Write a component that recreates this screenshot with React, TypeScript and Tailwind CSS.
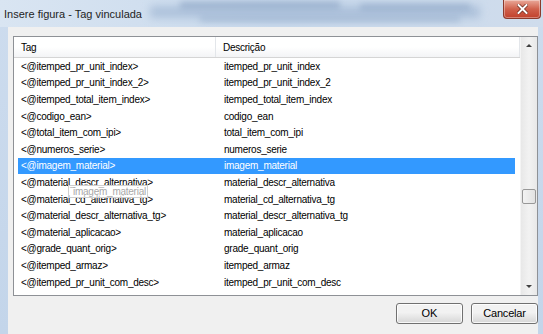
import React from "react";

const rows: [string, string][] = [
  ["<@itemped_pr_unit_index>", "itemped_pr_unit_index"],
  ["<@itemped_pr_unit_index_2>", "itemped_pr_unit_index_2"],
  ["<@itemped_total_item_index>", "itemped_total_item_index"],
  ["<@codigo_ean>", "codigo_ean"],
  ["<@total_item_com_ipi>", "total_item_com_ipi"],
  ["<@numeros_serie>", "numeros_serie"],
  ["<@imagem_material>", "imagem_material"],
  ["<@material_descr_alternativa>", "material_descr_alternativa"],
  ["<@material_cd_alternativa_tg>", "material_cd_alternativa_tg"],
  ["<@material_descr_alternativa_tg>", "material_descr_alternativa_tg"],
  ["<@material_aplicacao>", "material_aplicacao"],
  ["<@grade_quant_orig>", "grade_quant_orig"],
  ["<@itemped_armaz>", "itemped_armaz"],
  ["<@itemped_pr_unit_com_desc>", "itemped_pr_unit_com_desc"],
];

const SELECTED = 6;

export default function App() {
  return (
    <div className="relative w-[543px] h-[334px] overflow-hidden flex flex-col bg-gradient-to-b from-[#cddcee] to-[#c3d5ea] font-['Liberation_Sans',Arial,sans-serif]">
      {/* Title bar (aero glass) */}
      <div className="relative h-[27px] shrink-0 overflow-hidden bg-gradient-to-r from-[#d9e5f2] via-[#c9d9ec] to-[#cfdcec]">
        {/* blurred stuff behind the glass */}
        <div className="absolute left-[150px] top-[6px] w-[330px] h-[12px] bg-[#9fb6d3] blur-[4px] opacity-70" />
        <div className="absolute left-[180px] top-[2px] w-[160px] h-[6px] bg-[#7f99bd] blur-[3px] opacity-60" />
        <div className="absolute left-[360px] top-[4px] w-[110px] h-[6px] bg-[#8aa3c4] blur-[3px] opacity-60" />
        <div className="absolute left-[200px] top-[16px] w-[260px] h-[6px] bg-[#8ea7c7] blur-[3px] opacity-50" />
        <div className="relative pl-[4px] pt-[6px] text-[11px] text-[#1e1e1e]">
          Insere figura - Tag vinculada
        </div>
        {/* close button */}
        <div className="absolute left-[503px] top-0 w-[38px] h-[19px] rounded-b-[4px] border border-t-0 border-[#8b3a2c] bg-gradient-to-b from-[#e9a99a] via-[#d0614c] to-[#c1402b] flex items-center justify-center shadow-[inset_0_0_0_1px_rgba(255,255,255,0.35)]">
          <svg width="11" height="10" viewBox="0 0 11 10">
            <path d="M1.5 1 L9.5 9 M9.5 1 L1.5 9" stroke="#6a2518" strokeWidth="3.4" strokeLinecap="square" />
            <path d="M1.5 1 L9.5 9 M9.5 1 L1.5 9" stroke="#ffffff" strokeWidth="2" strokeLinecap="square" />
          </svg>
        </div>
      </div>

      {/* Client area */}
      <div className="flex-1 ml-[8px] mr-[5px] bg-[#f0f0f0] flex flex-col pt-[9px] pl-[5px]">
        {/* List view */}
        <div className="relative h-[260px] border border-[#8e9196] bg-white flex text-[10px] tracking-[-0.25px] text-black">
          <div className="flex-1 flex flex-col">
            {/* header */}
            <div className="h-[21px] flex border-b border-[#d5d5d5] bg-gradient-to-b from-white from-50% to-[#f3f4f6]">
              <div className="w-[202px] pl-[7px] flex items-center border-r border-[#e3e6ea]">Tag</div>
              <div className="flex-1 pl-[7px] flex items-center border-r border-[#e3e6ea]">Descrição</div>
            </div>
            {/* rows */}
            <div className="flex flex-col">
              {rows.map(([tag, desc], i) => (
                <div
                  key={i}
                  className={
                    i === SELECTED
                      ? "h-[16.6px] ml-[4px] mr-[5px] flex items-center bg-[#3399ff] text-white"
                      : "h-[16.6px] ml-[4px] mr-[5px] flex items-center"
                  }
                >
                  <div className="w-[198px] pl-[3px] whitespace-nowrap">{tag}</div>
                  <div className="flex-1 pl-[8px] whitespace-nowrap">{desc}</div>
                </div>
              ))}
            </div>
          </div>

          {/* vertical scrollbar */}
          <div className="w-[17px] flex flex-col bg-gradient-to-r from-[#e8e8e8] via-[#f2f2f2] to-[#e8e8e8] border-l border-[#f4f4f4]">
            <div className="h-[17px] flex items-center justify-center">
              <div className="w-0 h-0 border-l-[3px] border-r-[3px] border-b-[3px] border-l-transparent border-r-transparent border-b-[#404040]" />
            </div>
            <div className="flex-1 flex flex-col">
              <div className="mt-[135px] mx-[1px] h-[15px] rounded-[2px] border border-[#989898] bg-gradient-to-r from-[#f3f3f3] to-[#e2e2e2]" />
            </div>
            <div className="h-[17px] flex items-center justify-center">
              <div className="w-0 h-0 border-l-[3px] border-r-[3px] border-t-[3px] border-l-transparent border-r-transparent border-t-[#404040]" />
            </div>
          </div>

          {/* tooltip */}
          <div className="absolute left-[54px] top-[148px] w-[80px] h-[13px] border border-[#cfcfcf] bg-white/70 text-[#a8a8a8] flex items-center pl-[4px] whitespace-nowrap">
            imagem_material
          </div>
        </div>

        {/* buttons */}
        <div className="flex justify-end gap-[8px] mt-[7px] text-[11px] text-black">
          <button className="w-[67px] h-[21px] rounded-[3px] border border-[#707070] bg-gradient-to-b from-[#f2f2f2] from-45% to-[#d6d6d6] shadow-[inset_0_0_0_1px_rgba(255,255,255,0.8)]">
            OK
          </button>
          <button className="w-[67px] h-[21px] rounded-[3px] border border-[#707070] bg-gradient-to-b from-[#f2f2f2] from-45% to-[#d6d6d6] shadow-[inset_0_0_0_1px_rgba(255,255,255,0.8)] tracking-[-0.2px]">
            Cancelar
          </button>
        </div>
      </div>
    </div>
  );
}
